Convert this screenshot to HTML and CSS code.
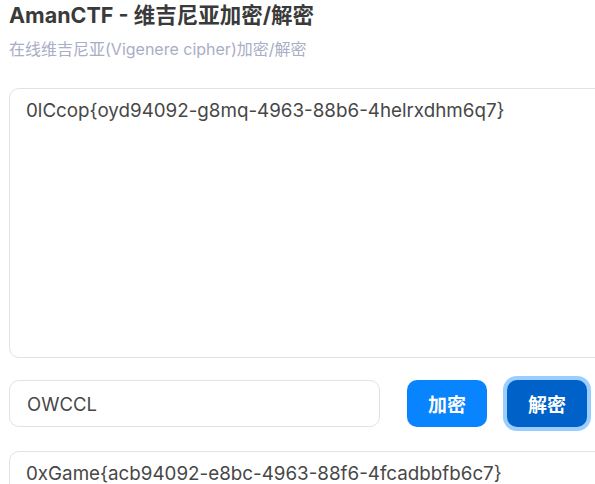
FILE: index.html
```html
<!DOCTYPE html>
<html lang="zh">
<head>
<meta charset="utf-8">
<link rel="stylesheet" href="styles.css">
</head>
<body>
<div class="page">
  <h1 class="title">AmanCTF - 维吉尼亚加密/解密</h1>
  <p class="subtitle">在线维吉尼亚(Vigenere cipher)加密/解密</p>
  <textarea class="box box-input">0lCcop{oyd94092-g8mq-4963-88b6-4helrxdhm6q7}</textarea>
  <div class="controls">
    <input class="key" type="text" value="OWCCL">
    <button class="btn btn-enc">加密</button>
    <button class="btn btn-dec">解密</button>
  </div>
  <textarea class="box box-output">0xGame{acb94092-e8bc-4963-88f6-4fcadbbfb6c7}</textarea>
</div>
</body>
</html>
```
FILE: styles.css
```css
html, body {
  margin: 0;
  padding: 0;
  overflow: hidden;
  background: #fff;
}
body {
  font-family: Inter, "Noto Sans CJK SC", sans-serif;
}
.page {
  width: 640px;
  padding: 0 9px;
}
.title {
  margin: 0;
  padding-top: 0;
  font-size: 21.5px;
  line-height: 30px;
  font-weight: 700;
  color: #3a3a3a;
}
.subtitle {
  margin: 8px 0 0;
  font-size: 16px;
  line-height: 22px;
  color: #a9adc6;
}
.box {
  display: block;
  box-sizing: border-box;
  width: 620px;
  border: 1px solid #e2e2e2;
  border-radius: 10px;
  padding: 8px 16px;
  font-family: Inter, sans-serif;
  font-size: 18.8px;
  line-height: 28px;
  color: #474747;
  resize: none;
  outline: none;
}
.box-input {
  margin-top: 28px;
  height: 270px;
}
.controls {
  display: flex;
  align-items: center;
  margin-top: 22px;
  gap: 20px;
}
.key {
  box-sizing: border-box;
  width: 371px;
  height: 47px;
  border: 1px solid #e2e2e2;
  border-radius: 10px;
  padding: 0 17px;
  font-family: Inter, sans-serif;
  font-size: 18.5px;
  color: #474747;
  outline: none;
  margin-right: 7px;
}
.btn {
  width: 80px;
  height: 47px;
  border: none;
  border-radius: 10px;
  font-family: Inter, "Noto Sans CJK SC", sans-serif;
  font-size: 19px;
  font-weight: 700;
  color: #fff;
}
.btn-enc {
  background: #0984ff;
}
.btn-dec {
  background: #0062c8;
  box-shadow: 0 0 0 4px #9ccdff;
}
.box-output {
  margin-top: 24px;
  height: 80px;
}
```
